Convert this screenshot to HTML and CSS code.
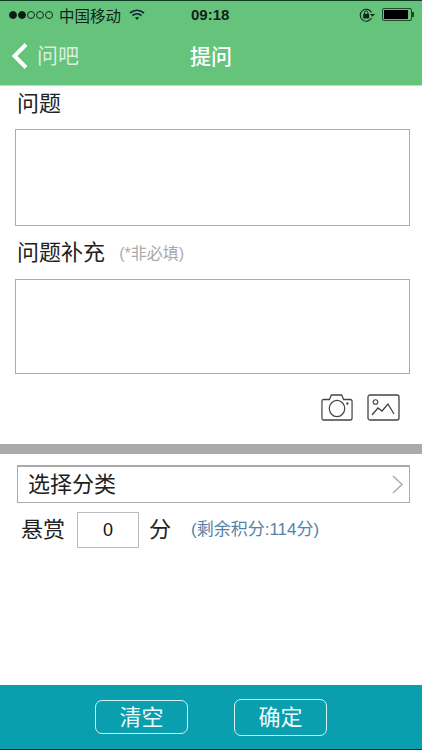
FILE: index.html
```html
<!DOCTYPE html>
<html lang="zh-CN">
<head>
  <meta charset="UTF-8" />
  <title>提问</title>
  <link rel="stylesheet" href="styles.css">
</head>
<body>
  <div class="screen">
    <div class="topbar">
      <div class="status">
        <div class="signal">
          <span class="dot on"></span><span class="dot on"></span><span class="dot"></span><span class="dot"></span><span class="dot"></span>
        </div>
        <span class="carrier">中国移动</span>
        <svg class="wifi" width="16" height="12" viewBox="0 0 16 12">
          <path d="M1 4 Q8 -1.5 15 4" fill="none" stroke="#123" stroke-width="1.6"/>
          <path d="M3.5 6.5 Q8 3 12.5 6.5" fill="none" stroke="#123" stroke-width="1.6"/>
          <path d="M6 8.6 Q8 7.4 10 8.6 L8 11 Z" fill="#123"/>
        </svg>
        <span class="time">09:18</span>
        <svg class="lock" width="18" height="16" viewBox="0 0 18 16">
          <path d="M13.6 11 A6 6 0 1 1 13.6 5.5" fill="none" stroke="#0f2a18" stroke-width="1.1"/>
          <path d="M12 7 L17 7 L14.5 9.8 Z" fill="#0f2a18"/>
          <rect x="5.2" y="6.8" width="6" height="4.6" rx="0.6" fill="#0f2a18"/>
          <path d="M6.5 7 V5.6 A1.7 1.7 0 0 1 9.9 5.6 V7" fill="none" stroke="#0f2a18" stroke-width="1"/>
        </svg>
        <div class="battery"><div class="battery-fill"></div></div>
        <div class="battery-tip"></div>
      </div>
      <div class="nav">
        <div class="back">
          <svg width="19" height="28" viewBox="0 0 19 28">
            <path d="M16 2.5 L4.5 14 L16 25.5" fill="none" stroke="#fff" stroke-width="4"/>
          </svg>
          <span>问吧</span>
        </div>
        <div class="nav-title">提问</div>
      </div>
    </div>

    <div class="form">
      <div class="label first">问题</div>
      <div class="textbox big"></div>
      <div class="label second">问题补充 <span class="hint">(*非必填)</span></div>
      <div class="textbox small"></div>
      <div class="attach">
        <svg width="32" height="28" viewBox="0 0 34 28" preserveAspectRatio="none">
          <path d="M2.5 6.5 H9 L11 2 H22 L24 6.5 H31 Q33 6.5 33 8.5 V25 Q33 27 31 27 H3 Q1 27 1 25 V8.5 Q1 6.5 2.5 6.5 Z" fill="none" stroke="#444" stroke-width="1.3"/>
          <circle cx="17" cy="15.5" r="8.2" fill="none" stroke="#444" stroke-width="1.3"/>
          <circle cx="28" cy="10.5" r="1.2" fill="#444"/>
        </svg>
        <svg width="33" height="27" viewBox="0 0 33 27">
          <rect x="1" y="1" width="31" height="25" rx="2" fill="none" stroke="#444" stroke-width="1.3"/>
          <circle cx="8.5" cy="8" r="2.3" fill="none" stroke="#444" stroke-width="1.1"/>
          <path d="M5 21 L11 14 L15 17 L21 10 L27 20" fill="none" stroke="#444" stroke-width="1.3"/>
        </svg>
      </div>
    </div>

    <div class="divider"></div>

    <div class="options">
      <div class="select">
        <span class="select-text">选择分类</span>
        <svg width="11" height="19" viewBox="0 0 11 19">
          <path d="M1 1 L10 9.5 L1 18" fill="none" stroke="#aaa" stroke-width="1.5"/>
        </svg>
      </div>
      <div class="reward">
        <span>悬赏</span>
        <div class="points">0</div>
        <span>分</span>
        <span class="balance">(剩余积分:114分)</span>
      </div>
    </div>

    <div class="footer">
      <div class="btn">清空</div>
      <div class="btn tall">确定</div>
    </div>
  </div>
</body>
</html>
```

FILE: styles.css
```css
* {
  box-sizing: border-box;
}

body {
  margin: 0;
  background: #fff;
  font-family: "Liberation Sans", "Noto Sans CJK SC", sans-serif;
}

.screen {
  width: 422px;
  height: 750px;
  display: flex;
  flex-direction: column;
  border-bottom: 1px solid #0a2f36;
  overflow: hidden;
}

.topbar {
  height: 86px;
  flex: none;
  background: #66c37c;
  border-top: 1px solid #0f3d22;
  border-bottom: 1px solid #b5dfbf;
}

.status {
  height: 27px;
  padding: 0 8px 0 9px;
  display: flex;
  align-items: center;
  color: #10241a;
}

.signal {
  display: flex;
  gap: 1px;
}

.dot {
  width: 8px;
  height: 8px;
  border-radius: 50%;
  border: 1px solid #14281c;
}

.dot.on {
  background: #0c1c12;
}

.carrier {
  margin-left: 6px;
  font-size: 15.5px;
}

.wifi {
  margin-left: 8px;
}

.time {
  margin-left: 46px;
  font-size: 15px;
  font-weight: bold;
}

.lock {
  margin-left: auto;
  margin-right: 6px;
}

.battery {
  width: 30px;
  height: 13px;
  border: 1px solid #1d4a2b;
  border-radius: 2px;
  padding: 1px;
}

.battery-fill {
  width: 24px;
  height: 100%;
  background: #000;
}

.battery-tip {
  width: 2px;
  height: 5px;
  background: #1d4a2b;
}

.nav {
  height: 57px;
  padding-bottom: 3px;
  position: relative;
  display: flex;
  align-items: center;
  justify-content: center;
}

.back {
  position: absolute;
  left: 10px;
  top: 14px;
  display: flex;
  align-items: center;
  gap: 8px;
  color: #d5f0dc;
  font-size: 21px;
  line-height: 28px;
}

.nav-title {
  color: #fff;
  font-size: 21px;
  font-weight: 500;
}

.form {
  height: 358px;
  flex: none;
  padding: 0 12px 0 15px;
}

.label {
  font-size: 22px;
  color: #222;
  line-height: 30px;
  padding-left: 2px;
}

.first {
  margin-top: 3px;
  margin-bottom: 10px;
}

.second {
  margin-top: 12px;
  margin-bottom: 10px;
}

.hint {
  margin-left: 8px;
  font-size: 16px;
  color: #aaa;
  vertical-align: 1px;
}

.textbox {
  border: 1px solid #aaa;
  background: #fff;
}

.big {
  height: 97px;
}

.small {
  height: 95px;
}

.attach {
  margin-top: 19px;
  padding-right: 10px;
  display: flex;
  justify-content: flex-end;
  align-items: center;
  gap: 14px;
}

.divider {
  height: 10px;
  flex: none;
  background: #aaa;
}

.options {
  flex: 1;
  padding: 11px 12px 0 17px;
}

.select {
  height: 38px;
  border: 1px solid #aaa;
  border-top-width: 2px;
  padding: 0 6px 0 10px;
  display: flex;
  align-items: center;
  justify-content: space-between;
  font-size: 22px;
  color: #222;
}

.select-text {
  margin-top: -6px;
}

.reward {
  margin-top: 9px;
  padding-left: 4px;
  display: flex;
  align-items: center;
  font-size: 22px;
  line-height: 30px;
  color: #222;
}

.points {
  width: 62px;
  height: 36px;
  margin: 0 10px 0 12px;
  border: 1px solid #bbb;
  display: flex;
  align-items: center;
  justify-content: center;
  font-size: 18px;
  color: #111;
}

.balance {
  margin-left: 20px;
  font-size: 17px;
  color: #5583a8;
}

.footer {
  height: 64px;
  flex: none;
  background: #0a9fae;
  display: flex;
  align-items: center;
  justify-content: center;
  gap: 46px;
}

.btn {
  width: 93px;
  height: 34px;
  padding-bottom: 4px;
  border: 1px solid #d8f2f4;
  border-radius: 7px;
  display: flex;
  align-items: center;
  justify-content: center;
  color: #eefafa;
  font-size: 22px;
}

.tall {
  height: 37px;
}
```
